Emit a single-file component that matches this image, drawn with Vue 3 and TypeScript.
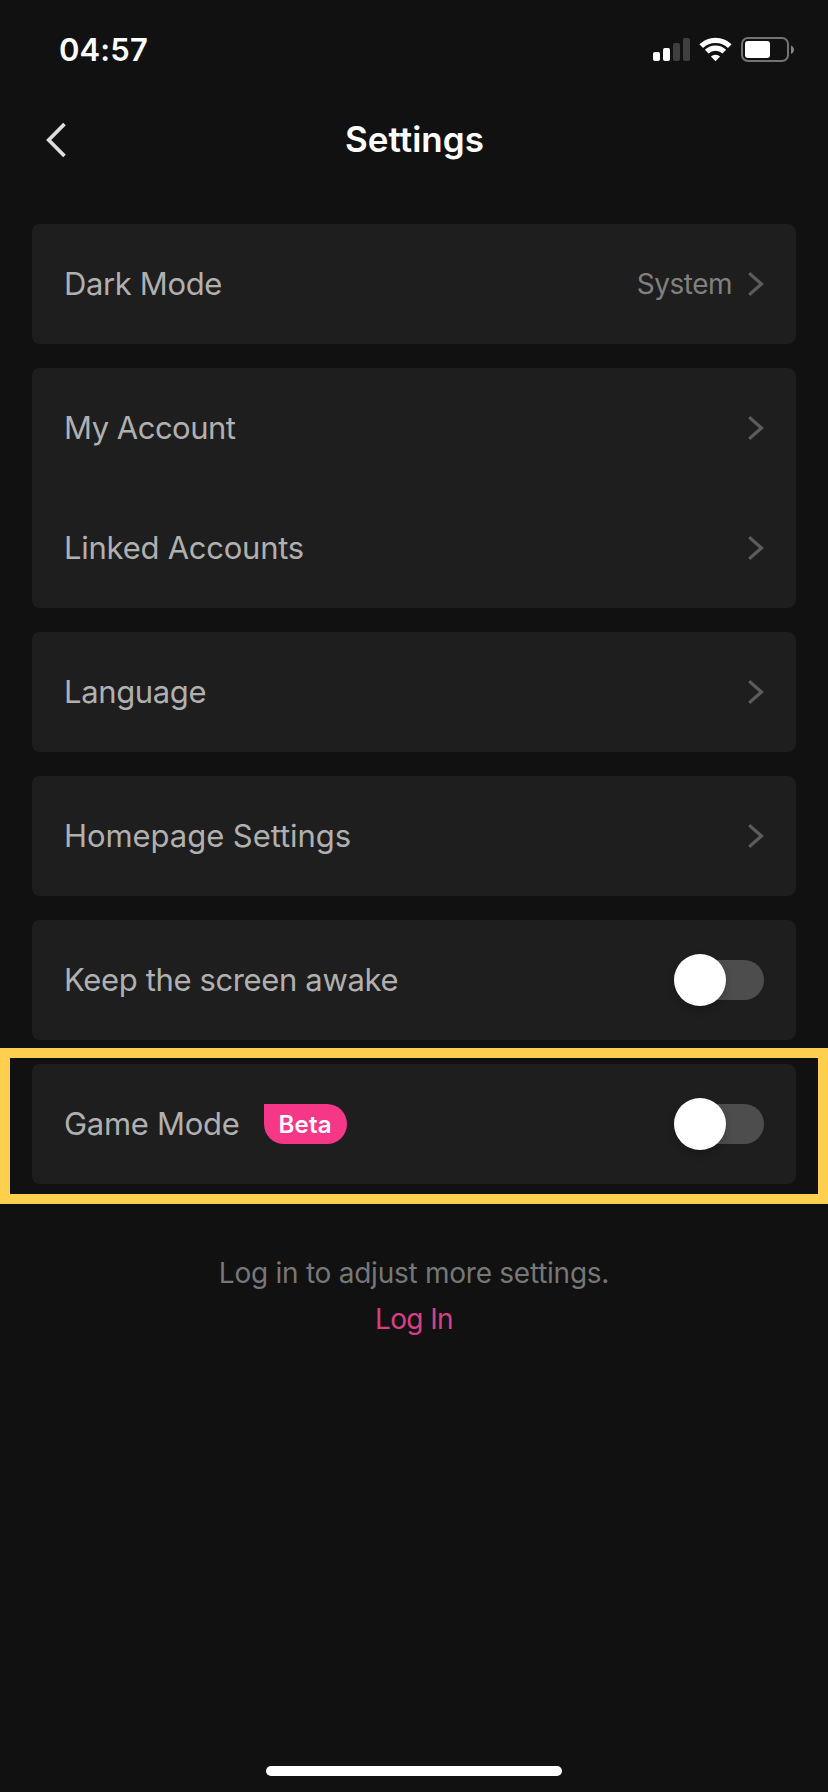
<script setup lang="ts">
import { reactive } from 'vue'

interface Row {
  id: string
  label: string
  kind: 'link' | 'toggle'
  value?: string
  badge?: string
  on?: boolean
}

interface Group {
  rows: Row[]
  highlighted?: boolean
}

const groups = reactive<Group[]>([
  { rows: [{ id: 'dark', label: 'Dark Mode', kind: 'link', value: 'System' }] },
  {
    rows: [
      { id: 'account', label: 'My Account', kind: 'link' },
      { id: 'linked', label: 'Linked Accounts', kind: 'link' },
    ],
  },
  { rows: [{ id: 'language', label: 'Language', kind: 'link' }] },
  { rows: [{ id: 'homepage', label: 'Homepage Settings', kind: 'link' }] },
  { rows: [{ id: 'awake', label: 'Keep the screen awake', kind: 'toggle', on: false }] },
  {
    rows: [{ id: 'game', label: 'Game Mode', kind: 'toggle', badge: 'Beta', on: false }],
    highlighted: true,
  },
])
</script>

<template>
  <div class="screen">
    <div class="status">
      <span class="time">04:57</span>
      <svg class="indicators" viewBox="650 34 146 30" width="146" height="30">
        <g fill="#fff">
          <rect x="653" y="52" width="7" height="9" rx="2" />
          <rect x="663" y="48" width="7" height="13" rx="2" />
        </g>
        <g fill="#3f3f3f">
          <rect x="673" y="43" width="7" height="18" rx="2" />
          <rect x="683" y="38" width="7" height="23" rx="2" />
        </g>
        <g fill="none" stroke="#fff" stroke-width="5.2">
          <path d="M701.2 46.2a20.4 20.4 0 0 1 28.6 0" />
          <path d="M706.7 51.7a12.6 12.6 0 0 1 17.6 0" />
        </g>
        <path d="M715.5 61.3l-4.6-4.7a6.6 6.6 0 0 1 9.2 0z" fill="#fff" />
        <rect x="742" y="38" width="46" height="23" rx="6" fill="none" stroke="#737373" stroke-width="2" />
        <rect x="745" y="41" width="25" height="17" rx="3" fill="#fff" />
        <path d="M791 45.500c4 2 4 6.500 0 8.500z" fill="#858585" />
      </svg>
    </div>

    <header class="nav">
      <button class="back" aria-label="Back">
        <svg viewBox="0 0 22 36" width="22" height="36">
          <path d="M19.500 2L3.700 18l15.800 16" fill="none" stroke="#dedede" stroke-width="3.700" />
        </svg>
      </button>
      <h1 class="title">Settings</h1>
    </header>

    <main class="groups">
      <section
        v-for="(group, i) in groups"
        :key="i"
        class="card"
        :class="{ highlighted: group.highlighted }"
      >
        <div v-for="row in group.rows" :key="row.id" class="row">
          <span class="label" :class="row.id">{{ row.label }}</span>
          <span v-if="row.badge" class="badge">{{ row.badge }}</span>
          <span class="spacer"></span>
          <template v-if="row.kind === 'link'">
            <span v-if="row.value" class="value">{{ row.value }}</span>
            <svg class="chevron" viewBox="0 0 16 24" width="16" height="24">
              <path d="M1.200 1.200L13.500 12L1.200 22.800" fill="none" stroke="#5c5c5c" stroke-width="3.200" />
            </svg>
          </template>
          <button
            v-else
            class="switch"
            :class="{ on: row.on }"
            role="switch"
            :aria-checked="row.on"
            :aria-label="row.label"
            @click="row.on = !row.on"
          >
            <span class="knob"></span>
          </button>
        </div>
      </section>
    </main>

    <footer class="login">
      <p class="hint">Log in to adjust more settings.</p>
      <a class="action">Log In</a>
    </footer>

    <div class="home-bar"></div>
  </div>
</template>

<style>
body {
  background: #111;
}
</style>

<style scoped>
.screen {
  box-sizing: border-box;
  width: 828px;
  height: 1792px;
  display: flex;
  flex-direction: column;
  background: #111;
  color: #b0b0b0;
  font-family: Inter, "Liberation Sans", sans-serif;
  overflow: hidden;
}
button {
  padding: 0;
  border: 0;
  background: none;
}
.status {
  flex: none;
  display: flex;
  align-items: center;
  justify-content: space-between;
  height: 98px;
  padding: 0 32px 0 58px;
}
.time {
  padding: 1px 0 0 1px;
  color: #fff;
  font-size: 31px;
  line-height: 40px;
  font-weight: 600;
  letter-spacing: 0.1px;
}
.nav {
  flex: none;
  display: grid;
  grid-template-columns: 100px 1fr 100px;
  align-items: center;
  height: 84px;
}
.back {
  display: flex;
  padding-left: 45px;
}
.title {
  margin: 0;
  padding: 0 0 2px 1px;
  color: #fff;
  text-align: center;
  font-size: 35px;
  line-height: 42px;
  font-weight: 600;
}
.groups {
  display: flex;
  flex-direction: column;
  gap: 24px;
  padding: 42px 32px 0;
}
.card {
  position: relative;
  border-radius: 8px;
  background: #1e1e1e;
}
.highlighted::after {
  content: "";
  position: absolute;
  inset: -16px -32px -20px;
  border: 10px solid #ffcf4d;
  pointer-events: none;
}
.row {
  display: flex;
  align-items: center;
  height: 120px;
  padding: 0 32px;
}
.label {
  font-size: 31px;
  line-height: 40px;
  letter-spacing: -0.36px;
  white-space: nowrap;
}
.label.account {
  letter-spacing: -0.5px;
}
.label.linked {
  letter-spacing: -0.25px;
}
.label.homepage {
  letter-spacing: -0.06px;
}
.label.game {
  letter-spacing: -0.28px;
}
.spacer {
  flex: 1;
}
.value {
  margin-right: 16px;
  color: #808080;
  font-size: 28px;
  letter-spacing: -0.5px;
}
.badge {
  box-sizing: border-box;
  display: flex;
  align-items: center;
  justify-content: center;
  width: 83px;
  height: 40px;
  margin-left: 24px;
  padding-top: 1px;
  border-radius: 0 20px 20px 20px;
  background: #f63788;
  color: #fff;
  font-size: 24px;
  font-weight: 600;
  letter-spacing: 0.2px;
}
.switch {
  display: flex;
  align-items: center;
  width: 90px;
  height: 40px;
  border-radius: 20px;
  background: #4d4d4d;
}
.switch.on {
  justify-content: flex-end;
  background: #f63788;
}
.knob {
  width: 52px;
  height: 52px;
  flex: none;
  border-radius: 50%;
  background: #fff;
  box-shadow: 0 4px 8px rgba(0, 0, 0, 0.22);
}
.login {
  display: flex;
  flex-direction: column;
  align-items: center;
  padding-top: 66px;
  font-size: 28px;
  line-height: 46px;
}
.hint {
  margin: 0;
  color: #777;
  letter-spacing: -0.25px;
}
.action {
  color: #d94084;
  letter-spacing: -0.6px;
}
.home-bar {
  width: 296px;
  height: 10px;
  margin: auto auto 16px;
  border-radius: 5px;
  background: #fff;
}
</style>
